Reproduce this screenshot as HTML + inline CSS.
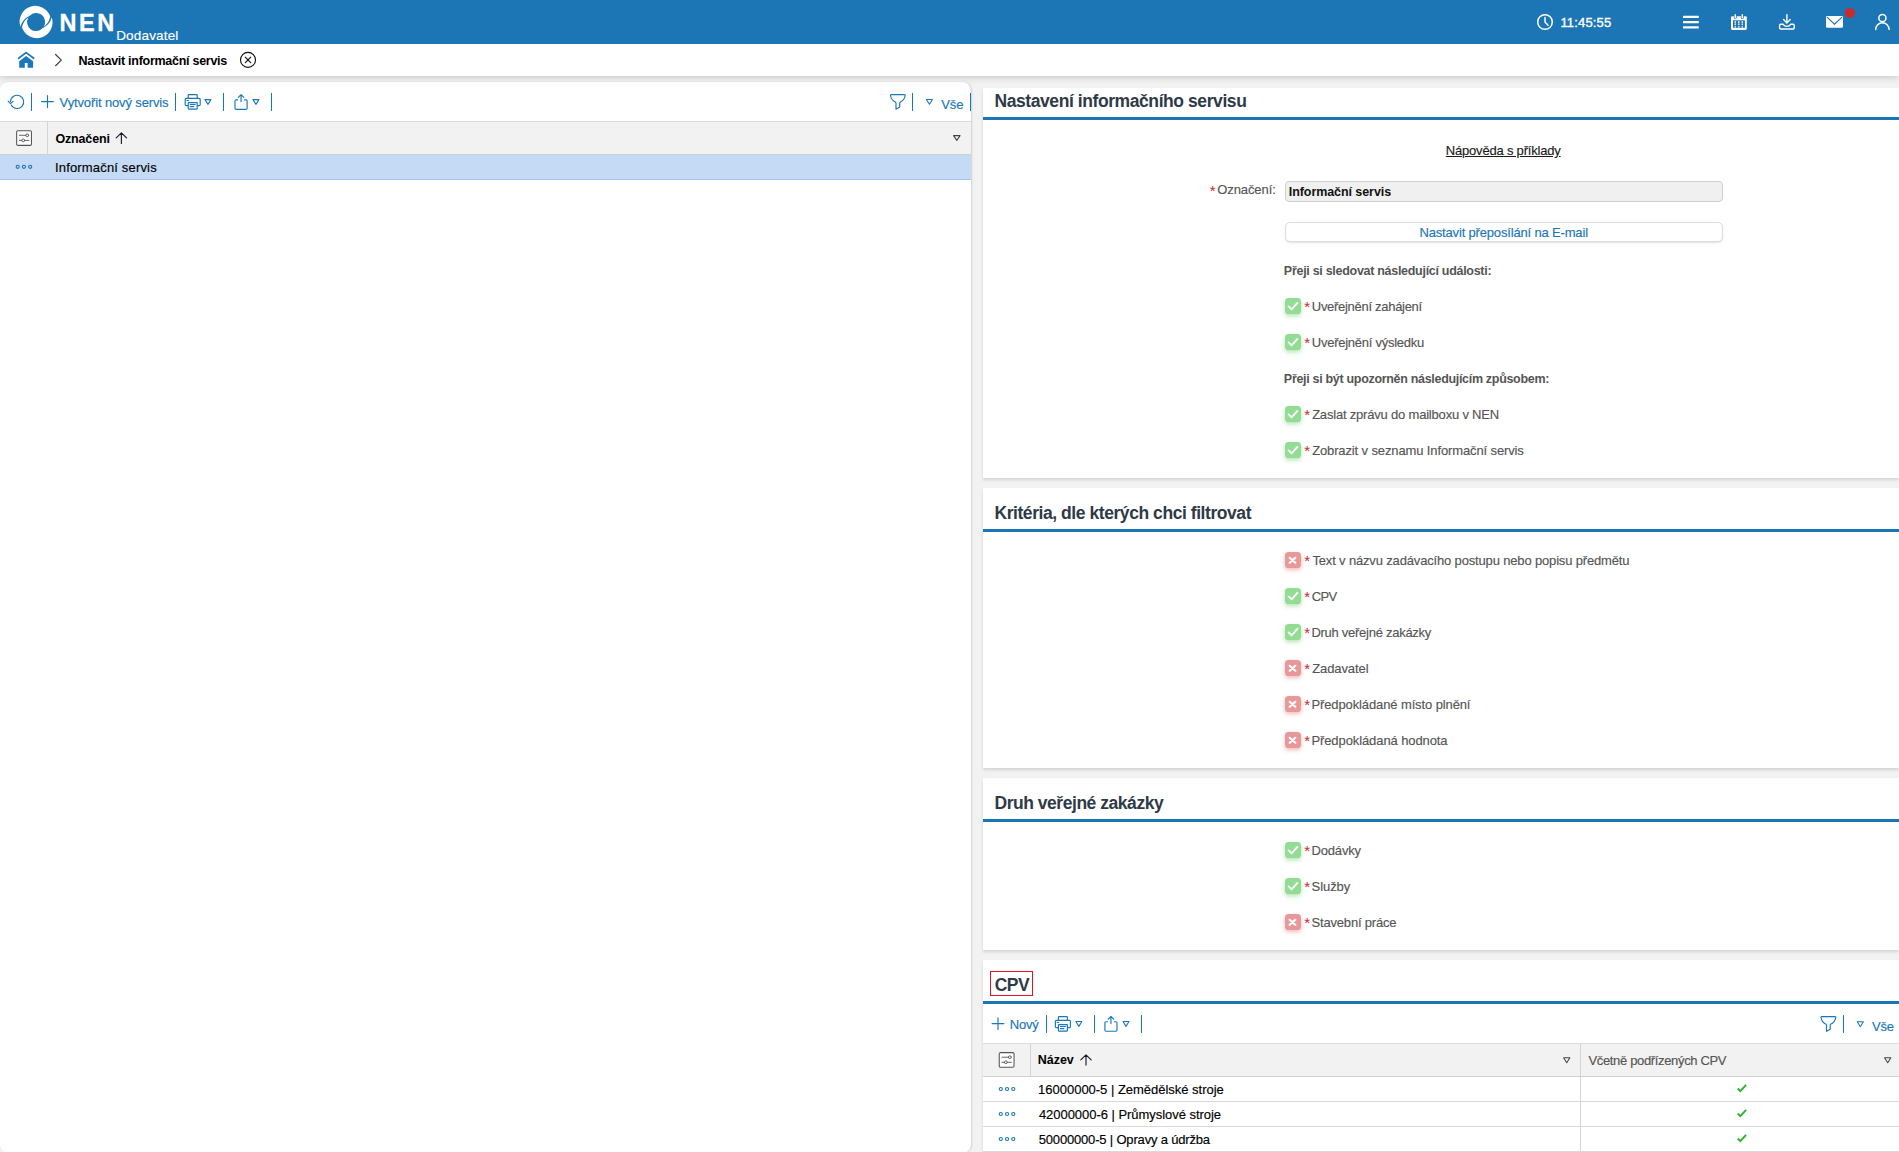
<!DOCTYPE html>
<html lang="cs"><head><meta charset="utf-8"><title>NEN - Nastavit informační servis</title>
<style>
*{box-sizing:border-box;margin:0;padding:0}
html,body{width:1899px;height:1152px;overflow:hidden;background:#f2f2f2;font-family:"Liberation Sans",sans-serif;position:relative}
.a{position:absolute}
.t{position:absolute;white-space:nowrap;line-height:normal}
svg{position:absolute;overflow:visible}
#hdr{left:0;top:0;width:1899px;height:44px;background:#1c75b4}
#crumb{left:0;top:44px;width:1899px;height:32px;background:#fff;box-shadow:0 1px 7px rgba(0,0,0,.2)}
#left{left:0;top:82px;width:971px;height:1071px;background:#fff;border-radius:8.5px;box-shadow:1px 0 2px rgba(0,0,0,.14)}
.sec{left:983px;width:916px;background:#fff;box-shadow:0 2px 3px rgba(0,0,0,.13)}
.bl{left:983px;width:916px;height:3px;background:#1c75b4}
.sep{width:1.4px;background:#1a76ba}
.th{background:#f2f2f2;border-top:1px solid #dcdcdc;border-bottom:1px solid #d0d0d0}
.vl{width:1px;background:#d4d4d4}
.hl{height:1px;background:#d9d9d9}
.cb{position:absolute;left:1285px;width:16px;height:16px;border-radius:3.6px}
.cb svg{left:0;top:0;width:16px;height:16px}
.cb.ok{background:#93dc93;box-shadow:0 2px 4px rgba(110,200,110,.5)}
.cb.no{background:#e89898;box-shadow:0 2px 4px rgba(225,120,120,.5)}
.g{display:contents}
h2.t{margin:0}

</style></head><body>
<nav class="g" aria-label="breadcrumb">
<div class="a" id="crumb"></div>
<span class="t" style="left:78.49px;top:54px;font-size:12.5px;font-weight:700;color:#000;letter-spacing:-0.274px;">Nastavit informační servis</span>
</nav>
<header class="g">
<div class="a" id="hdr"></div>
<span class="t" style="left:59.54px;top:10px;font-size:23.5px;font-weight:700;color:#fff;letter-spacing:2.512px;-webkit-text-stroke:0.35px #fff;">NEN</span>
<span class="t" style="left:116.13px;top:28px;font-size:13.5px;font-weight:400;color:#fff;letter-spacing:0.182px;-webkit-text-stroke:0.15px #fff;">Dodavatel</span>
<span class="t" style="left:1560.38px;top:15px;font-size:13px;font-weight:400;color:#fff;letter-spacing:0.177px;-webkit-text-stroke:0.35px #fff;">11:45:55</span>
</header>
<aside class="g">
<div class="a" id="left"></div>
<div class="a th" style="left:0;top:121px;width:971px;height:34px"></div>
<div class="a vl" style="left:47px;top:122px;height:32px"></div>
<div class="a" style="left:0;top:155px;width:971px;height:25px;background:#c5daf5;border-bottom:1px solid #a3c5f0"></div>
<div class="a sep" style="left:30.7px;top:93px;height:17.8px"></div>
<div class="a sep" style="left:174.7px;top:93px;height:17.8px"></div>
<div class="a sep" style="left:222.8px;top:93px;height:17.8px"></div>
<div class="a sep" style="left:270.9px;top:93px;height:17.8px"></div>
<div class="a sep" style="left:911.7px;top:93px;height:17.8px"></div>
<div class="a sep" style="left:969.6px;top:93px;height:17.8px"></div>
<span class="t" style="left:59.58px;top:95px;font-size:13px;font-weight:400;color:#1a76ba;letter-spacing:-0.129px;-webkit-text-stroke:0.15px #1a76ba;">Vytvořit nový servis</span>
<span class="t" style="left:941.37px;top:97px;font-size:13px;font-weight:400;color:#1a76ba;letter-spacing:-0.202px;-webkit-text-stroke:0.15px #1a76ba;">Vše</span>
<span class="t" style="left:55.40px;top:132px;font-size:12.5px;font-weight:700;color:#000;letter-spacing:-0.155px;">Označeni</span>
<span class="t" style="left:55.03px;top:160px;font-size:13px;font-weight:400;color:#000;letter-spacing:0.165px;-webkit-text-stroke:0.15px #000;">Informační servis</span>
</aside>
<main class="g">
<section class="g">
<div class="a sec" style="top:88px;height:390px"></div>
<div class="a bl" style="top:117px"></div>
<div class="a" style="left:1285px;top:181px;width:438px;height:21px;background:#f0f0f0;border:1px solid #cfcfcf;border-radius:4px"></div>
<div class="a" style="left:1285px;top:222px;width:438px;height:20px;background:#fff;border:1px solid #dedede;border-radius:5px;box-shadow:0 1px 2px rgba(0,0,0,.12)"></div>
<div class="cb ok" style="top:298.1px"><svg viewBox="0 0 16 16"><path d="M3.6 8.4 L6.6 11.3 L12.4 4.9" fill="none" stroke="#fff" stroke-width="1.9" stroke-linecap="round" stroke-linejoin="round"/></svg></div>
<div class="cb ok" style="top:334.1px"><svg viewBox="0 0 16 16"><path d="M3.6 8.4 L6.6 11.3 L12.4 4.9" fill="none" stroke="#fff" stroke-width="1.9" stroke-linecap="round" stroke-linejoin="round"/></svg></div>
<div class="cb ok" style="top:406.1px"><svg viewBox="0 0 16 16"><path d="M3.6 8.4 L6.6 11.3 L12.4 4.9" fill="none" stroke="#fff" stroke-width="1.9" stroke-linecap="round" stroke-linejoin="round"/></svg></div>
<div class="cb ok" style="top:442.1px"><svg viewBox="0 0 16 16"><path d="M3.6 8.4 L6.6 11.3 L12.4 4.9" fill="none" stroke="#fff" stroke-width="1.9" stroke-linecap="round" stroke-linejoin="round"/></svg></div>
<h2 class="t" style="left:994.46px;top:91px;font-size:17.5px;font-weight:700;color:#2e3a47;letter-spacing:-0.419px;">Nastavení informačního servisu</h2>
<span class="t" style="left:1445.81px;top:143px;font-size:13px;font-weight:400;color:#1a1a1a;letter-spacing:-0.197px;-webkit-text-stroke:0.15px #1a1a1a;text-decoration:underline;">Nápověda s příklady</span>
<span class="t" style="left:1217.23px;top:182px;font-size:13px;font-weight:400;color:#555;letter-spacing:-0.084px;-webkit-text-stroke:0.15px #555;">Označení:</span>
<span class="t" style="left:1209.67px;top:182px;font-size:15px;font-weight:400;color:#c9252d;letter-spacing:0.000px;">*</span>
<span class="t" style="left:1288.84px;top:185px;font-size:12.5px;font-weight:700;color:#111;letter-spacing:-0.078px;">Informační servis</span>
<span class="t" style="left:1419.46px;top:225px;font-size:13px;font-weight:400;color:#1a76ba;letter-spacing:-0.167px;-webkit-text-stroke:0.15px #1a76ba;">Nastavit přeposílání na E-mail</span>
<span class="t" style="left:1283.86px;top:264px;font-size:12.5px;font-weight:700;color:#555;letter-spacing:-0.292px;">Přeji si sledovat následující události:</span>
<span class="t" style="left:1283.86px;top:372px;font-size:12.5px;font-weight:700;color:#555;letter-spacing:-0.312px;">Přeji si být upozorněn následujícím způsobem:</span>
<span class="t" style="left:1304.20px;top:298px;font-size:15px;font-weight:400;color:#c9252d;letter-spacing:0.000px;">*</span>
<span class="t" style="left:1311.82px;top:299px;font-size:13px;font-weight:400;color:#555;letter-spacing:-0.294px;-webkit-text-stroke:0.15px #555;">Uveřejnění zahájení</span>
<span class="t" style="left:1304.20px;top:334px;font-size:15px;font-weight:400;color:#c9252d;letter-spacing:0.000px;">*</span>
<span class="t" style="left:1311.82px;top:335px;font-size:13px;font-weight:400;color:#555;letter-spacing:-0.256px;-webkit-text-stroke:0.15px #555;">Uveřejnění výsledku</span>
<span class="t" style="left:1304.20px;top:406px;font-size:15px;font-weight:400;color:#c9252d;letter-spacing:0.000px;">*</span>
<span class="t" style="left:1312.14px;top:407px;font-size:13px;font-weight:400;color:#555;letter-spacing:-0.196px;-webkit-text-stroke:0.15px #555;">Zaslat zprávu do mailboxu v NEN</span>
<span class="t" style="left:1304.20px;top:442px;font-size:15px;font-weight:400;color:#c9252d;letter-spacing:0.000px;">*</span>
<span class="t" style="left:1312.14px;top:443px;font-size:13px;font-weight:400;color:#555;letter-spacing:-0.123px;-webkit-text-stroke:0.15px #555;">Zobrazit v seznamu Informační servis</span>
</section>
<section class="g">
<div class="a sec" style="top:488px;height:280px"></div>
<div class="a bl" style="top:529px"></div>
<div class="cb no" style="top:552.1px"><svg viewBox="0 0 16 16"><path d="M4.7 5.8 L10.3 10.8 M10.3 5.8 L4.7 10.8" fill="none" stroke="#fff" stroke-width="2.2" stroke-linecap="round"/></svg></div>
<div class="cb ok" style="top:588.1px"><svg viewBox="0 0 16 16"><path d="M3.6 8.4 L6.6 11.3 L12.4 4.9" fill="none" stroke="#fff" stroke-width="1.9" stroke-linecap="round" stroke-linejoin="round"/></svg></div>
<div class="cb ok" style="top:624.1px"><svg viewBox="0 0 16 16"><path d="M3.6 8.4 L6.6 11.3 L12.4 4.9" fill="none" stroke="#fff" stroke-width="1.9" stroke-linecap="round" stroke-linejoin="round"/></svg></div>
<div class="cb no" style="top:660.1px"><svg viewBox="0 0 16 16"><path d="M4.7 5.8 L10.3 10.8 M10.3 5.8 L4.7 10.8" fill="none" stroke="#fff" stroke-width="2.2" stroke-linecap="round"/></svg></div>
<div class="cb no" style="top:696.1px"><svg viewBox="0 0 16 16"><path d="M4.7 5.8 L10.3 10.8 M10.3 5.8 L4.7 10.8" fill="none" stroke="#fff" stroke-width="2.2" stroke-linecap="round"/></svg></div>
<div class="cb no" style="top:732.1px"><svg viewBox="0 0 16 16"><path d="M4.7 5.8 L10.3 10.8 M10.3 5.8 L4.7 10.8" fill="none" stroke="#fff" stroke-width="2.2" stroke-linecap="round"/></svg></div>
<h2 class="t" style="left:994.46px;top:503px;font-size:17.5px;font-weight:700;color:#2e3a47;letter-spacing:-0.437px;">Kritéria, dle kterých chci filtrovat</h2>
<span class="t" style="left:1304.20px;top:552px;font-size:15px;font-weight:400;color:#c9252d;letter-spacing:0.000px;">*</span>
<span class="t" style="left:1312.44px;top:553px;font-size:13px;font-weight:400;color:#555;letter-spacing:-0.159px;-webkit-text-stroke:0.15px #555;">Text v názvu zadávacího postupu nebo popisu předmětu</span>
<span class="t" style="left:1304.20px;top:588px;font-size:15px;font-weight:400;color:#c9252d;letter-spacing:0.000px;">*</span>
<span class="t" style="left:1311.79px;top:589px;font-size:13px;font-weight:400;color:#555;letter-spacing:-0.642px;-webkit-text-stroke:0.15px #555;">CPV</span>
<span class="t" style="left:1304.20px;top:624px;font-size:15px;font-weight:400;color:#c9252d;letter-spacing:0.000px;">*</span>
<span class="t" style="left:1311.43px;top:625px;font-size:13px;font-weight:400;color:#555;letter-spacing:-0.269px;-webkit-text-stroke:0.15px #555;">Druh veřejné zakázky</span>
<span class="t" style="left:1304.20px;top:660px;font-size:15px;font-weight:400;color:#c9252d;letter-spacing:0.000px;">*</span>
<span class="t" style="left:1312.14px;top:661px;font-size:13px;font-weight:400;color:#555;letter-spacing:-0.078px;-webkit-text-stroke:0.15px #555;">Zadavatel</span>
<span class="t" style="left:1304.20px;top:696px;font-size:15px;font-weight:400;color:#c9252d;letter-spacing:0.000px;">*</span>
<span class="t" style="left:1311.43px;top:697px;font-size:13px;font-weight:400;color:#555;letter-spacing:-0.113px;-webkit-text-stroke:0.15px #555;">Předpokládané místo plnění</span>
<span class="t" style="left:1304.20px;top:732px;font-size:15px;font-weight:400;color:#c9252d;letter-spacing:0.000px;">*</span>
<span class="t" style="left:1311.43px;top:733px;font-size:13px;font-weight:400;color:#555;letter-spacing:-0.095px;-webkit-text-stroke:0.15px #555;">Předpokládaná hodnota</span>
</section>
<section class="g">
<div class="a sec" style="top:778px;height:172px"></div>
<div class="a bl" style="top:819px"></div>
<div class="cb ok" style="top:842.1px"><svg viewBox="0 0 16 16"><path d="M3.6 8.4 L6.6 11.3 L12.4 4.9" fill="none" stroke="#fff" stroke-width="1.9" stroke-linecap="round" stroke-linejoin="round"/></svg></div>
<div class="cb ok" style="top:878.1px"><svg viewBox="0 0 16 16"><path d="M3.6 8.4 L6.6 11.3 L12.4 4.9" fill="none" stroke="#fff" stroke-width="1.9" stroke-linecap="round" stroke-linejoin="round"/></svg></div>
<div class="cb no" style="top:914.1px"><svg viewBox="0 0 16 16"><path d="M4.7 5.8 L10.3 10.8 M10.3 5.8 L4.7 10.8" fill="none" stroke="#fff" stroke-width="2.2" stroke-linecap="round"/></svg></div>
<h2 class="t" style="left:994.46px;top:793px;font-size:17.5px;font-weight:700;color:#2e3a47;letter-spacing:-0.462px;">Druh veřejné zakázky</h2>
<span class="t" style="left:1304.20px;top:842px;font-size:15px;font-weight:400;color:#c9252d;letter-spacing:0.000px;">*</span>
<span class="t" style="left:1311.43px;top:843px;font-size:13px;font-weight:400;color:#555;letter-spacing:-0.153px;-webkit-text-stroke:0.15px #555;">Dodávky</span>
<span class="t" style="left:1304.20px;top:878px;font-size:15px;font-weight:400;color:#c9252d;letter-spacing:0.000px;">*</span>
<span class="t" style="left:1311.54px;top:879px;font-size:13px;font-weight:400;color:#555;letter-spacing:-0.056px;-webkit-text-stroke:0.15px #555;">Služby</span>
<span class="t" style="left:1304.20px;top:914px;font-size:15px;font-weight:400;color:#c9252d;letter-spacing:0.000px;">*</span>
<span class="t" style="left:1311.54px;top:915px;font-size:13px;font-weight:400;color:#555;letter-spacing:-0.185px;-webkit-text-stroke:0.15px #555;">Stavební práce</span>
</section>
<section class="g">
<div class="a sec" style="top:960px;height:200px"></div>
<div class="a bl" style="top:1001px"></div>
<div class="a" style="left:990px;top:971px;width:43px;height:25px;border:1px solid #e81123"></div>
<div class="a th" style="left:983px;top:1043px;width:916px;height:34px"></div>
<div class="a vl" style="left:1030px;top:1044px;height:32px"></div>
<div class="a vl" style="left:1580px;top:1044px;height:108px"></div>
<div class="a hl" style="left:983px;top:1101px;width:916px"></div>
<div class="a hl" style="left:983px;top:1126px;width:916px"></div>
<div class="a hl" style="left:983px;top:1151px;width:916px"></div>
<div class="a sep" style="left:1045.8px;top:1015px;height:17.8px"></div>
<div class="a sep" style="left:1093.8px;top:1015px;height:17.8px"></div>
<div class="a sep" style="left:1140.8px;top:1015px;height:17.8px"></div>
<div class="a sep" style="left:1842.9px;top:1015px;height:17.8px"></div>
<h2 class="t" style="left:994.68px;top:975px;font-size:17.5px;font-weight:700;color:#2e3a47;letter-spacing:-0.515px;">CPV</h2>
<span class="t" style="left:1009.81px;top:1017px;font-size:13px;font-weight:400;color:#1a76ba;letter-spacing:-0.229px;-webkit-text-stroke:0.15px #1a76ba;">Nový</span>
<span class="t" style="left:1872.02px;top:1019px;font-size:13px;font-weight:400;color:#1a76ba;letter-spacing:-0.188px;-webkit-text-stroke:0.15px #1a76ba;">Vše</span>
<span class="t" style="left:1037.84px;top:1053px;font-size:12.5px;font-weight:700;color:#000;letter-spacing:-0.035px;">Název</span>
<span class="t" style="left:1588.48px;top:1053px;font-size:13px;font-weight:400;color:#555;letter-spacing:-0.343px;-webkit-text-stroke:0.15px #555;">Včetně podřízených CPV</span>
<span class="t" style="left:1038.11px;top:1082px;font-size:13px;font-weight:400;color:#000;letter-spacing:-0.018px;-webkit-text-stroke:0.15px #000;">16000000-5 | Zemědělské stroje</span>
<span class="t" style="left:1038.92px;top:1107px;font-size:13px;font-weight:400;color:#000;letter-spacing:-0.039px;-webkit-text-stroke:0.15px #000;">42000000-6 | Průmyslové stroje</span>
<span class="t" style="left:1038.72px;top:1132px;font-size:13px;font-weight:400;color:#000;letter-spacing:-0.176px;-webkit-text-stroke:0.15px #000;">50000000-5 | Opravy a údržba</span>
</section>
</main>
<svg class="a" style="left:0;top:0;width:1899px;height:1152px" viewBox="0 0 1899 1152" ><g transform="translate(36.1,22)" fill="#fff"><path d="M -15.6 4.7 A 15.7 15.7 0 0 1 14.1 -5.5 Q 13.2 0.8 7.7 4.6 A 8.95 8.95 0 0 0 -6.4 -6.25 Q -14.0 -2.6 -15.6 4.7 Z"/><path d="M -15.6 4.7 A 15.7 15.7 0 0 1 14.1 -5.5 Q 13.2 0.8 7.7 4.6 A 8.95 8.95 0 0 0 -6.4 -6.25 Q -14.0 -2.6 -15.6 4.7 Z" transform="rotate(180)"/></g>
<g fill="none" stroke="#fff" stroke-width="1.5" stroke-linecap="round"><circle cx="1545" cy="22" r="7.3"/><path d="M1545 17.6 V22 L1548 25.2"/></g>
<g fill="#fff"><rect x="1683" y="15.7" width="15.8" height="2.3" rx=".6"/><rect x="1683" y="21" width="15.8" height="2.3" rx=".6"/><rect x="1683" y="26.3" width="15.8" height="2.3" rx=".6"/></g>
<g><rect x="1731" y="16.2" width="15.8" height="13.7" rx="1.3" fill="#fff"/><rect x="1733" y="20.3" width="11.9" height="7.5" fill="#1c75b4"/><rect x="1733.85" y="13.6" width="2.9" height="5.2" rx="1.2" fill="#1c75b4"/><rect x="1734.55" y="14.1" width="1.5" height="4.2" rx=".7" fill="#fff"/><rect x="1740.85" y="13.6" width="2.9" height="5.2" rx="1.2" fill="#1c75b4"/><rect x="1741.55" y="14.1" width="1.5" height="4.2" rx=".7" fill="#fff"/><rect x="1734.55" y="21.2" width="1.5" height="3.9" fill="#fff" opacity=".9"/><rect x="1734.55" y="26.1" width="1.5" height="1.5" fill="#fff" opacity=".85"/><rect x="1738.05" y="21.2" width="1.5" height="3.9" fill="#fff" opacity=".9"/><rect x="1738.05" y="26.1" width="1.5" height="1.5" fill="#fff" opacity=".85"/><rect x="1741.55" y="21.2" width="1.5" height="3.9" fill="#fff" opacity=".9"/><rect x="1741.55" y="26.1" width="1.5" height="1.5" fill="#fff" opacity=".85"/><rect x="1733" y="22.9" width="11.9" height=".7" fill="#1c75b4" opacity=".7"/></g>
<g fill="none" stroke="#fff" stroke-width="1.4" stroke-linecap="round" stroke-linejoin="round"><path d="M1786.9 14.6 V22.6 M1783.6 19.6 L1786.9 22.9 L1790.2 19.6"/><path d="M1783.2 24.2 H1780.6 Q1779.6 24.2 1779.6 25.2 V28 Q1779.6 29 1780.6 29 H1793.2 Q1794.2 29 1794.2 28 V25.2 Q1794.2 24.2 1793.2 24.2 H1790.6 Q1789.6 26.4 1786.9 26.4 Q1784.2 26.4 1783.2 24.2 Z"/></g>
<g><rect x="1826" y="16" width="17" height="11.8" rx="1.3" fill="#fff"/><path d="M1827 17.2 L1834.5 24.2 L1842 17.2" fill="none" stroke="#1c75b4" stroke-width="1.1"/></g>
<circle cx="1849.9" cy="12.9" r="5" fill="#cc2a2a"/>
<g fill="none" stroke="#fff" stroke-width="1.5" stroke-linecap="round"><circle cx="1882.4" cy="18" r="3.6"/><path d="M1875.7 29.6 A 6.7 6.9 0 0 1 1889.1 29.6"/></g>
<g><path d="M18.6 58.3 L26.1 52.6 L33.7 58.3" fill="none" stroke="#1a76ba" stroke-width="1.7" stroke-linecap="round" stroke-linejoin="round"/><path d="M26.1 55.9 L33.1 61.2 V66.9 Q33.1 67.8 32.2 67.8 H27.6 V63.1 H24.8 V67.8 H20.1 Q19.2 67.8 19.2 66.9 V61.2 Z" fill="#1a76ba"/></g>
<path d="M55.6 54.5 L61.3 60.1 L55.6 65.7" fill="none" stroke="#3a3f4a" stroke-width="1.2" stroke-linecap="round" stroke-linejoin="round"/>
<g fill="none" stroke="#111" stroke-width="1.15" stroke-linecap="round"><circle cx="248" cy="59.9" r="7.5"/><path d="M245.3 57.2 L250.7 62.6 M250.7 57.2 L245.3 62.6"/></g>
<g fill="none" stroke="#1a76ba" stroke-width="1.15" stroke-linecap="round" stroke-linejoin="round"><path d="M10.51 101.55 A 6.6 6.6 0 1 1 11.27 105.00"/><path d="M8.10 101.20 L10.50 103.60 L13.00 101.30"/></g>
<path d="M41.60 101.55 H53.40 M47.5 95.65 V107.45" fill="none" stroke="#1a76ba" stroke-width="1.15" stroke-linecap="round"/>
<path d="M992.10 1023.6 H1003.90 M998.0 1017.70 V1029.50" fill="none" stroke="#1a76ba" stroke-width="1.15" stroke-linecap="round"/>
<g transform="translate(184.6,94.0)" fill="none" stroke="#1a76ba" stroke-width="1.15" stroke-linejoin="round" stroke-linecap="round"><path d="M3.6 4.3 V1.2 Q3.6 .6 4.2 .6 H12 Q12.6 .6 12.6 1.2 V4.3"/><path d="M3.6 11.6 H1.7 Q.6 11.6 .6 10.5 V5.4 Q.6 4.3 1.7 4.3 H14.5 Q15.6 4.3 15.6 5.4 V10.5 Q15.6 11.6 14.5 11.6 H12.6"/><rect x="3.6" y="8.6" width="9" height="6.5" rx=".5" fill="#fff"/><path d="M5.6 10.5 H10.6 M5.6 12.6 H9 M2.3 6.5 H3.8"/></g>
<g transform="translate(1054.8,1016.0)" fill="none" stroke="#1a76ba" stroke-width="1.15" stroke-linejoin="round" stroke-linecap="round"><path d="M3.6 4.3 V1.2 Q3.6 .6 4.2 .6 H12 Q12.6 .6 12.6 1.2 V4.3"/><path d="M3.6 11.6 H1.7 Q.6 11.6 .6 10.5 V5.4 Q.6 4.3 1.7 4.3 H14.5 Q15.6 4.3 15.6 5.4 V10.5 Q15.6 11.6 14.5 11.6 H12.6"/><rect x="3.6" y="8.6" width="9" height="6.5" rx=".5" fill="#fff"/><path d="M5.6 10.5 H10.6 M5.6 12.6 H9 M2.3 6.5 H3.8"/></g>
<path d="M204.93 99.62 H210.97 L207.95 104.38 Z" fill="none" stroke="#1a76ba" stroke-width="1.05" stroke-linejoin="round"/>
<path d="M252.93 99.62 H258.98 L255.95 104.38 Z" fill="none" stroke="#1a76ba" stroke-width="1.05" stroke-linejoin="round"/>
<path d="M926.42 99.43 H932.48 L929.45 104.28 Z" fill="none" stroke="#1a76ba" stroke-width="1.05" stroke-linejoin="round"/>
<path d="M953.52 135.62 H960.08 L956.80 140.38 Z" fill="none" stroke="#444" stroke-width="1.05" stroke-linejoin="round"/>
<path d="M1075.83 1021.52 H1081.88 L1078.85 1026.38 Z" fill="none" stroke="#1a76ba" stroke-width="1.05" stroke-linejoin="round"/>
<path d="M1123.03 1021.52 H1128.97 L1126.00 1026.38 Z" fill="none" stroke="#1a76ba" stroke-width="1.05" stroke-linejoin="round"/>
<path d="M1857.22 1021.82 H1863.38 L1860.30 1026.67 Z" fill="none" stroke="#1a76ba" stroke-width="1.05" stroke-linejoin="round"/>
<path d="M1563.62 1057.83 H1569.88 L1566.75 1062.78 Z" fill="none" stroke="#444" stroke-width="1.05" stroke-linejoin="round"/>
<path d="M1884.53 1057.83 H1890.88 L1887.70 1062.78 Z" fill="none" stroke="#444" stroke-width="1.05" stroke-linejoin="round"/>
<g transform="translate(234.4,94.0)" fill="none" stroke="#1a76ba" stroke-width="1.15" stroke-linecap="round" stroke-linejoin="round"><path d="M3.2 5.85 H1.7 Q.6 5.85 .6 6.95 V14.2 Q.6 15.3 1.7 15.3 H11.6 Q12.7 15.3 12.7 14.2 V6.95 Q12.7 5.85 11.6 5.85 H10.1"/><path d="M6.65 .7 V7.7 M3.9 3.3 L6.65 .6 L9.4 3.3"/></g>
<g transform="translate(1104.3,1015.9)" fill="none" stroke="#1a76ba" stroke-width="1.15" stroke-linecap="round" stroke-linejoin="round"><path d="M3.2 5.85 H1.7 Q.6 5.85 .6 6.95 V14.2 Q.6 15.3 1.7 15.3 H11.6 Q12.7 15.3 12.7 14.2 V6.95 Q12.7 5.85 11.6 5.85 H10.1"/><path d="M6.65 .7 V7.7 M3.9 3.3 L6.65 .6 L9.4 3.3"/></g>
<g transform="translate(889.9,94.0)" fill="none" stroke="#1a76ba" stroke-width="1.15" stroke-linejoin="round" stroke-linecap="round"><path d="M1.3 .6 H14.6 Q15.5 .6 15.3 1.5 Q14.4 6.3 10.6 7.9 Q9.8 8.3 9.8 9.2 V13.1 L6.1 15.2 V9.2 Q6.1 8.3 5.3 7.9 Q1.5 6.3 .6 1.5 Q.4 .6 1.3 .6 Z"/></g>
<g transform="translate(1820.4,1016.1)" fill="none" stroke="#1a76ba" stroke-width="1.15" stroke-linejoin="round" stroke-linecap="round"><path d="M1.3 .6 H14.6 Q15.5 .6 15.3 1.5 Q14.4 6.3 10.6 7.9 Q9.8 8.3 9.8 9.2 V13.1 L6.1 15.2 V9.2 Q6.1 8.3 5.3 7.9 Q1.5 6.3 .6 1.5 Q.4 .6 1.3 .6 Z"/></g>
<g transform="translate(16.1,130.2)" fill="none" stroke="#555" stroke-width="1.05"><rect x=".55" y=".55" width="14.8" height="14.6" rx="1.2" fill="#fff"/><path d="M3.2 5.1 H9.7 M12.5 5.1 H12.6 M3.2 10.2 H5.7 M8.5 10.2 H12.8" stroke-linecap="round" stroke-width=".9"/><circle cx="11.1" cy="5.1" r="1.4" stroke-width=".9"/><circle cx="7.1" cy="10.2" r="1.4" stroke-width=".9"/></g>
<g transform="translate(998.7,1052.1)" fill="none" stroke="#555" stroke-width="1.05"><rect x=".55" y=".55" width="14.8" height="14.6" rx="1.2" fill="#fff"/><path d="M3.2 5.1 H9.7 M12.5 5.1 H12.6 M3.2 10.2 H5.7 M8.5 10.2 H12.8" stroke-linecap="round" stroke-width=".9"/><circle cx="11.1" cy="5.1" r="1.4" stroke-width=".9"/><circle cx="7.1" cy="10.2" r="1.4" stroke-width=".9"/></g>
<path d="M121.4 132.79999999999998 V143.4 M116.2 137.89999999999998 L121.4 132.79999999999998 L126.60000000000001 137.89999999999998" fill="none" stroke="#1a1a2a" stroke-width="1.15" stroke-linecap="round" stroke-linejoin="round"/>
<path d="M1086.0 1054.8 V1065.1 M1080.8 1059.9 L1086.0 1054.8 L1091.2 1059.9" fill="none" stroke="#1a1a2a" stroke-width="1.15" stroke-linecap="round" stroke-linejoin="round"/>
<g fill="none" stroke="#1a76ba" stroke-width="1.1"><circle cx="17.70" cy="166.8" r="1.55"/><circle cx="23.95" cy="166.8" r="1.55"/><circle cx="30.20" cy="166.8" r="1.55"/></g>
<g fill="none" stroke="#1a76ba" stroke-width="1.1"><circle cx="1000.80" cy="1089.0" r="1.55"/><circle cx="1007.05" cy="1089.0" r="1.55"/><circle cx="1013.30" cy="1089.0" r="1.55"/></g>
<g fill="none" stroke="#1a76ba" stroke-width="1.1"><circle cx="1000.80" cy="1114.0" r="1.55"/><circle cx="1007.05" cy="1114.0" r="1.55"/><circle cx="1013.30" cy="1114.0" r="1.55"/></g>
<g fill="none" stroke="#1a76ba" stroke-width="1.1"><circle cx="1000.80" cy="1139.0" r="1.55"/><circle cx="1007.05" cy="1139.0" r="1.55"/><circle cx="1013.30" cy="1139.0" r="1.55"/></g>
<path d="M1737.70 1088.50 L1740.40 1091.20 L1746.10 1084.80" fill="none" stroke="#2cb42c" stroke-width="1.9" stroke-linejoin="miter"/>
<path d="M1737.70 1113.50 L1740.40 1116.20 L1746.10 1109.80" fill="none" stroke="#2cb42c" stroke-width="1.9" stroke-linejoin="miter"/>
<path d="M1737.70 1138.50 L1740.40 1141.20 L1746.10 1134.80" fill="none" stroke="#2cb42c" stroke-width="1.9" stroke-linejoin="miter"/></svg>
</body></html>
